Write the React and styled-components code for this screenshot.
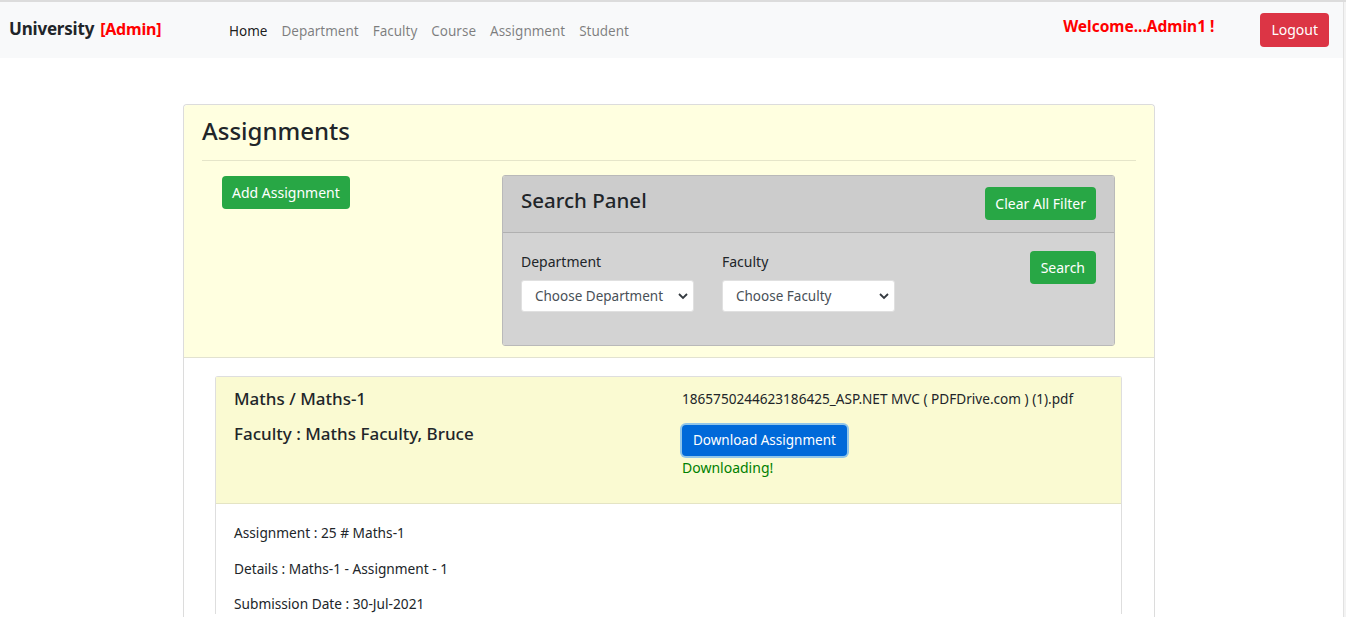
import React from "react";
import styled, { createGlobalStyle } from "styled-components";

const GlobalStyle = createGlobalStyle`
  html, body {
    margin: 0;
    padding: 0;
    background: #fff;
    font-family: "Noto Sans", "Open Sans", Arial, sans-serif;
    font-size: 14px;
    color: #212529;
  }
  * { box-sizing: border-box; }
`;

const Page = styled.div`
  display: flex;
  min-height: 617px;
  border-top: 2px solid #dcdcdc;
`;

const Content = styled.div`
  flex: 1;
  min-width: 0;
`;

const ScrollStrip = styled.div`
  width: 3px;
  background: #f3f3f3;
  border-left: 1px solid #e2e2e2;
`;

const Navbar = styled.nav`
  height: 56px;
  background: #f8f9fa;
  display: flex;
  align-items: center;
  padding: 0 14px 0 9px;
`;

const Brand = styled.div`
  font-size: 17px;
  font-weight: 700;
  color: #212529;
  margin-top: -3px;
  width: 213px;
  letter-spacing: -0.2px;
`;

const AdminTag = styled.span`
  color: #ff0000;
  font-size: 16px;
  margin-left: 6px;
`;

const NavLinks = styled.div`
  display: flex;
  flex: 1;
  margin-top: 2px;
`;

const NavLink = styled.a`
  padding: 0 7px;
  font-size: 13.5px;
  color: ${p => (p.active ? "rgba(0,0,0,0.9)" : "rgba(0,0,0,0.5)")};
  text-decoration: none;
  cursor: pointer;
`;

const Welcome = styled.div`
  color: #ff0000;
  font-weight: 700;
  font-size: 15.5px;
  margin-right: 46px;
  margin-top: -9px;
`;

const Button = styled.button`
  border: none;
  border-radius: 4px;
  color: #fff;
  font-family: inherit;
  font-size: ${p => p.fs || "14px"};
  line-height: 1;
  cursor: pointer;
  height: ${p => p.h || "33px"};
  padding: 0 ${p => p.px || "11px"};
  background: ${p =>
    p.variant === "danger" ? "#dc3545" : p.variant === "primary" ? "#0069d9" : "#28a745"};
  box-shadow: ${p => (p.focused ? "0 0 0 2px rgba(38,143,255,0.5)" : "none")};
`;

const Main = styled.main`
  padding-top: 46px;
  display: flex;
  justify-content: center;
  padding-right: 5px;
`;

const Card = styled.section`
  width: 972px;
  border: 1px solid #dcdcdc;
  border-bottom: none;
  border-radius: 4px 4px 0 0;
  background: #fff;
`;

const CardHeader = styled.div`
  background: #ffffe0;
  padding: 11px 18px 11px;
  border-bottom: 1px solid #e2e2d0;
  border-radius: 4px 4px 0 0;
`;

const Title = styled.h3`
  margin: 0 0 14px;
  font-size: 24px;
  font-weight: 500;
  line-height: 30px;
`;

const Divider = styled.hr`
  margin: 0 0 14px;
  border: none;
  border-top: 1px solid rgba(0, 0, 0, 0.1);
`;

const TopRow = styled.div`
  display: flex;
  padding: 0 21px 0 20px;
`;

const LeftCol = styled.div`
  width: 280px;
  padding-top: 1px;
`;

const SearchPanel = styled.div`
  flex: 1;
  border: 1px solid #b9b9b9;
  border-radius: 3px;
  overflow: hidden;
`;

const PanelHeader = styled.div`
  background: #cccccc;
  border-bottom: 1px solid #b0b0b0;
  padding: 11px 18px 12px;
  display: flex;
  justify-content: space-between;
  align-items: flex-start;
`;

const PanelTitle = styled.h4`
  margin: 0;
  font-size: 20.5px;
  font-weight: 500;
  line-height: 26px;
`;

const PanelBody = styled.div`
  background: #d3d3d3;
  padding: 18px 18px 33px;
  display: flex;
  align-items: flex-start;
`;

const Field = styled.div`
  display: flex;
  flex-direction: column;
  margin-right: 28px;
`;

const Label = styled.label`
  font-size: 14px;
  line-height: 21px;
  margin-bottom: 8px;
`;

const SelectWrap = styled.div`
  position: relative;
  width: 173px;
  height: 32px;
`;

const Select = styled.select`
  appearance: none;
  width: 100%;
  height: 100%;
  border: 1px solid #e0e0e0;
  border-radius: 3px;
  background: #fff;
  color: #495057;
  font-family: inherit;
  font-size: 13.5px;
  padding: 0 24px 0 13px;
`;

const Chevron = styled.svg`
  position: absolute;
  right: 6px;
  top: 12px;
  pointer-events: none;
`;

const Spacer = styled.div`
  flex: 1;
`;

const CardBody = styled.div`
  padding: 18px 32px 0 31px;
`;

const InnerCard = styled.div`
  border: 1px solid #dedede;
  border-bottom: none;
  border-radius: 3px 3px 0 0;
`;

const InnerHeader = styled.div`
  background: #fafad2;
  border-bottom: 1px solid #e4e4c4;
  padding: 11px 18px 25px;
  display: grid;
  grid-template-columns: 448px 1fr;
`;

const Subject = styled.h5`
  margin: 0 0 13px;
  font-size: 17px;
  font-weight: 500;
  line-height: 22px;
`;

const FileName = styled.div`
  font-size: 13.6px;
  line-height: 22px;
  margin-bottom: 15px;
`;

const Status = styled.div`
  color: #008000;
  font-size: 14px;
  line-height: 21px;
  margin-top: 1px;
`;

const InnerBody = styled.div`
  padding: 18px 18px 0;
`;

const Line = styled.p`
  margin: 0 0 14.5px;
  font-size: 13.7px;
  line-height: 21px;
`;

function ChooseSelect({ placeholder }) {
  return (
    <SelectWrap>
      <Select defaultValue="">
        <option value="">{placeholder}</option>
      </Select>
      <Chevron width="10" height="8" viewBox="0 0 10 8">
        <path d="M1 2l4 4 4-4" fill="none" stroke="#343a40" strokeWidth="1.8" />
      </Chevron>
    </SelectWrap>
  );
}

export default function App() {
  const links = ["Home", "Department", "Faculty", "Course", "Assignment", "Student"];
  return (
    <>
      <GlobalStyle />
      <Page>
        <Content>
          <Navbar>
            <Brand>
              University<AdminTag>[Admin]</AdminTag>
            </Brand>
            <NavLinks>
              {links.map((l, i) => (
                <NavLink key={l} active={i === 0}>{l}</NavLink>
              ))}
            </NavLinks>
            <Welcome>Welcome...Admin1 !</Welcome>
            <Button variant="danger" h="34px" px="11px">Logout</Button>
          </Navbar>

          <Main>
            <Card>
              <CardHeader>
                <Title>Assignments</Title>
                <Divider />
                <TopRow>
                  <LeftCol>
                    <Button px="10px">Add Assignment</Button>
                  </LeftCol>
                  <SearchPanel>
                    <PanelHeader>
                      <PanelTitle>Search Panel</PanelTitle>
                      <Button px="10px">Clear All Filter</Button>
                    </PanelHeader>
                    <PanelBody>
                      <Field>
                        <Label>Department</Label>
                        <ChooseSelect placeholder="Choose Department" />
                      </Field>
                      <Field>
                        <Label>Faculty</Label>
                        <ChooseSelect placeholder="Choose Faculty" />
                      </Field>
                      <Spacer />
                      <Button>Search</Button>
                    </PanelBody>
                  </SearchPanel>
                </TopRow>
              </CardHeader>

              <CardBody>
                <InnerCard>
                  <InnerHeader>
                    <div>
                      <Subject>Maths / Maths-1</Subject>
                      <Subject>Faculty : Maths Faculty, Bruce</Subject>
                    </div>
                    <div>
                      <FileName>1865750244623186425_ASP.NET MVC ( PDFDrive.com ) (1).pdf</FileName>
                      <Button variant="primary" focused h="31px" px="11px" fs="13.5px">
                        Download Assignment
                      </Button>
                      <Status>Downloading!</Status>
                    </div>
                  </InnerHeader>
                  <InnerBody>
                    <Line>Assignment : 25 # Maths-1</Line>
                    <Line>Details : Maths-1 - Assignment - 1</Line>
                    <Line>Submission Date : 30-Jul-2021</Line>
                  </InnerBody>
                </InnerCard>
              </CardBody>
            </Card>
          </Main>
        </Content>
        <ScrollStrip />
      </Page>
    </>
  );
}
